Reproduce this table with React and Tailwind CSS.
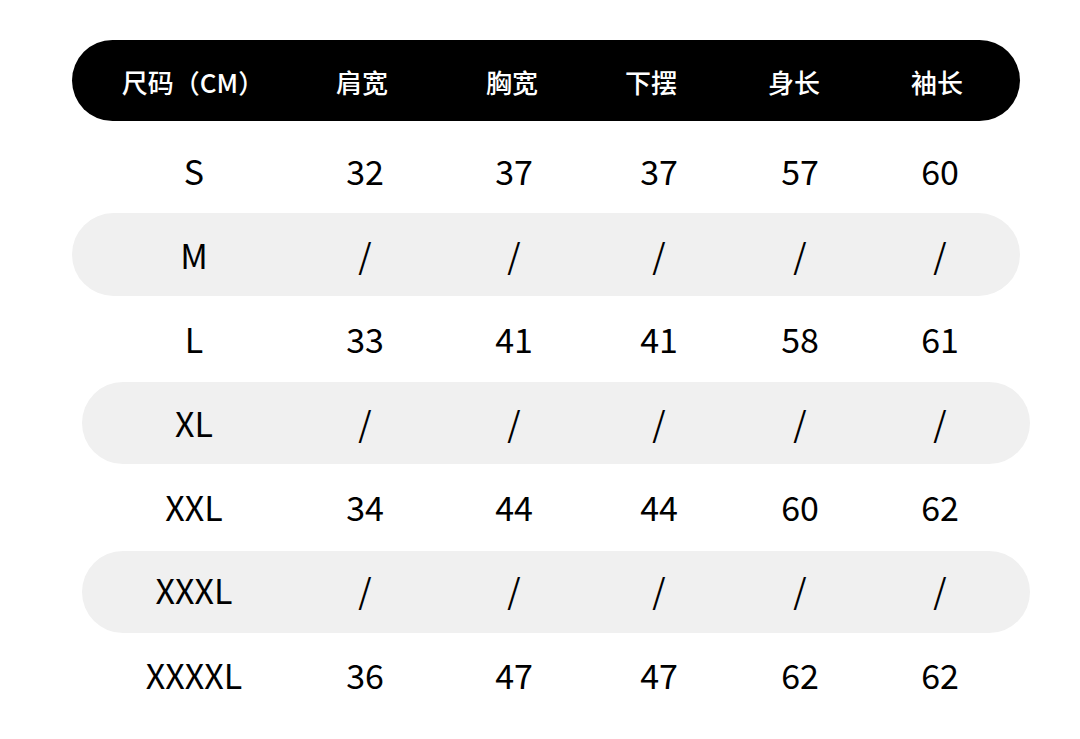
import React from 'react';

const HEADERS = ['尺码（CM）', '肩宽', '胸宽', '下摆', '身长', '袖长'];

const ROWS = [
  { size: 'S', values: ['32', '37', '37', '57', '60'], h: 'h-[92px]', pad: 'pt-[7px]' },
  { size: 'M', values: ['/', '/', '/', '/', '/'], h: 'h-[83px]', pill: 'ml-[72px]', pad: 'pt-[0px]' },
  { size: 'L', values: ['33', '41', '41', '58', '61'], h: 'h-[86px]', pad: 'pb-[1px]' },
  { size: 'XL', values: ['/', '/', '/', '/', '/'], h: 'h-[82px]', pill: 'ml-[82px]', shift: true, pad: 'pt-[0px]' },
  { size: 'XXL', values: ['34', '44', '44', '60', '62'], h: 'h-[87px]', pad: 'pb-[2px]' },
  { size: 'XXXL', values: ['/', '/', '/', '/', '/'], h: 'h-[82px]', pill: 'ml-[82px]', shift: true, pad: 'pb-[4px]' },
  { size: 'XXXXL', values: ['36', '47', '47', '62', '62'], h: 'h-[88px]', pad: 'pb-[5px]' },
];

const FONT = { fontFamily: '"Noto Sans CJK SC", "Noto Sans", sans-serif' };

function DataCells({ row }) {
  // column centers sit at the same x on every row, whatever the pill offset
  return (
    <div
      className={`grid grid-cols-[244px_98px_200px_90px_192px_88px] h-full items-center text-[34px] leading-none text-black ${row.shift ? 'ml-[-10px]' : ''}`}
    >
      {[row.size, ...row.values].map((v, i) => (
        <div key={i} className={`text-center ${row.pad}`}>{v}</div>
      ))}
    </div>
  );
}

function App() {
  return (
    <div className="w-[1080px] h-[739px] bg-white overflow-hidden" style={FONT}>
      <div className="pt-[40px]">
        {/* Header */}
        <div className="ml-[72px] w-[948px] h-[81px] bg-black rounded-full">
          <div className="grid grid-cols-[242px_96px_204px_74px_212px_74px] h-full items-center text-white text-[26px] font-medium leading-none">
            {HEADERS.map((h, i) => (
              <div key={i} className="flex justify-center pt-[3px] whitespace-nowrap">{h}</div>
            ))}
          </div>
        </div>

        {/* Rows */}
        {ROWS.map((row) =>
          row.pill ? (
            <div key={row.size} className={`${row.pill} w-[948px] ${row.h} bg-[#f0f0f0] rounded-full`}>
              <DataCells row={row} />
            </div>
          ) : (
            <div key={row.size} className={`ml-[72px] w-[948px] ${row.h}`}>
              <DataCells row={row} />
            </div>
          )
        )}
      </div>
    </div>
  );
}

export default App;
